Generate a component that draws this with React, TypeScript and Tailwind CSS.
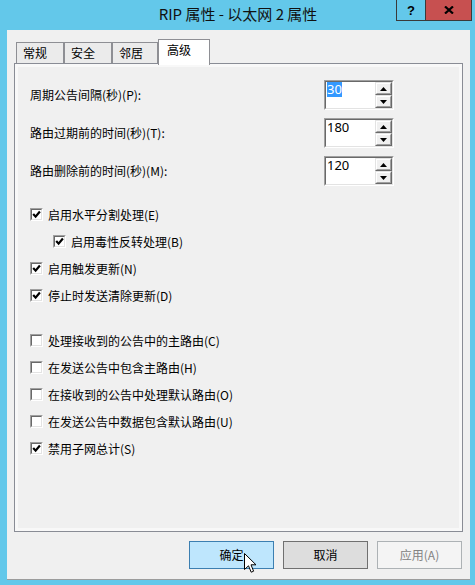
import React from "react";

const FONT = "font-['Noto_Sans_CJK_SC','Microsoft_YaHei',sans-serif]";

function Tri({ up }: { up: boolean }) {
  return (
    <svg width="7" height="4" viewBox="0 0 7 4" className="block">
      {up ? <polygon points="3.5,0 7,4 0,4" fill="#000" /> : <polygon points="0,0 7,0 3.5,4" fill="#000" />}
    </svg>
  );
}

function SpinBtn({ up }: { up: boolean }) {
  return (
    <div className="flex-1 border-t border-l border-[#e3e3e3] border-b border-r border-b-[#696969] border-r-[#696969]">
      <div className="h-full flex items-center justify-center bg-[#f0f0f0] border-t border-l border-white border-b border-r border-b-[#a0a0a0] border-r-[#a0a0a0]">
        <Tri up={up} />
      </div>
    </div>
  );
}

function Spin({ value, selected }: { value: string; selected?: boolean }) {
  return (
    <div className="w-[70px] h-[30px] border-t border-l border-[#a0a0a0] border-b border-r border-b-white border-r-white">
      <div className="h-full flex bg-white border-t border-l border-[#696969] border-b border-r border-b-[#e3e3e3] border-r-[#e3e3e3]">
        <div className="flex-1 flex items-start pl-[1px] pt-[0px]">
          <span
            className={`block text-[13px] leading-[15px] ${
              selected ? "bg-[#3399ff] text-white" : "text-black"
            } font-['Noto_Sans',sans-serif]`}
          >
            {value}
          </span>
        </div>
        <div className="w-[17px] flex flex-col">
          <SpinBtn up />
          <SpinBtn up={false} />
        </div>
      </div>
    </div>
  );
}

function Box({ checked }: { checked: boolean }) {
  return (
    <span className="w-[13px] h-[13px] shrink-0 border-t border-l border-[#a0a0a0] border-b border-r border-b-white border-r-white">
      <span className="w-full h-full flex items-center justify-center bg-white border-t border-l border-[#696969] border-b border-r border-b-[#e3e3e3] border-r-[#e3e3e3]">
        {checked && (
          <svg width="9" height="9" viewBox="0 0 9 9" className="block">
            <path d="M1.2 4.1 L3.6 6.7 L7.9 1.5" fill="none" stroke="#000" strokeWidth="2.2" />
          </svg>
        )}
      </span>
    </span>
  );
}

function CheckRow({ checked, label, indent }: { checked: boolean; label: string; indent?: boolean }) {
  return (
    <div className={`flex items-center h-[27px] ${indent ? "pl-[35px]" : "pl-[12px]"}`}>
      <Box checked={checked} />
      <span className="ml-[5px] text-[12px] leading-[16px] text-black">{label}</span>
    </div>
  );
}

function SpinRow({ label, value, selected }: { label: string; value: string; selected?: boolean }) {
  return (
    <div className="flex items-center h-[30px]">
      <div className="w-[306px] pl-[12px] text-[12px] leading-[16px] text-black">{label}</div>
      <Spin value={value} selected={selected} />
    </div>
  );
}

function Tab({ label, w }: { label: string; w: string }) {
  return (
    <div
      className={`${w} h-[21px] border-t border-l border-r border-[#8e8f94] bg-[#ebebeb] pl-[6px] text-[12px] leading-[19px] text-black`}
    >
      {label}
    </div>
  );
}

function Btn({ label, kind }: { label: string; kind: "def" | "normal" | "disabled" }) {
  const cls =
    kind === "def"
      ? "bg-[#bee6fd] border-[#3c7fb1] text-black"
      : kind === "normal"
      ? "bg-[#dddddd] border-[#707070] text-black"
      : "bg-[#f4f4f4] border-[#adb2b5] text-[#838383]";
  return (
    <div className={`relative w-[85px] h-[28px] border flex items-center justify-center text-[12px] leading-[16px] ${cls}`}>
      {label}
      {kind === "def" && (
        <svg width="13" height="20" viewBox="0 0 13 20" className="absolute left-[54px] top-[11px]">
          <path d="M0.5 0.5 L0.5 16.5 L4.5 12.8 L7.2 19.2 L9.6 18.2 L7 11.8 L12 11.8 Z" fill="#fff" stroke="#000" strokeWidth="1" strokeLinejoin="miter" />
        </svg>
      )}
    </div>
  );
}

export default function App() {
  return (
    <div className={`w-[475px] h-[585px] bg-[#63c8ea] flex flex-col ${FONT}`}>
      {/* title bar */}
      <div className="h-[30px] grid grid-cols-[1fr_auto_1fr] shrink-0">
        <div />
        <div className="self-center text-[15px] leading-[20px] text-[#111] pl-[1px] pb-[3px]">RIP 属性 - 以太网 2 属性</div>
        <div className="flex justify-end items-start pr-[3px]">
          <div className="w-[29px] h-[21px] border-l border-b border-[#3a3a3a] flex items-center justify-center text-[13px] font-bold leading-none text-black font-['Liberation_Sans',sans-serif]">
            ?
          </div>
          <div className="w-[47px] h-[21px] border-l border-r border-b border-[#3a3a3a] bg-[#c75050] flex items-center justify-center">
            <svg width="10" height="8" viewBox="0 0 10 8" className="block">
              <path d="M1 0.5 L9 7.5 M9 0.5 L1 7.5" stroke="#000" strokeWidth="2.2" />
            </svg>
          </div>
        </div>
      </div>

      {/* client area */}
      <div className="ml-[7px] w-[463px] h-[550px] bg-[#f0f0f0] border-b border-[#9c9c9c] flex flex-col">
        {/* tabs */}
        <div className="mt-[9px] ml-[9px] h-[24px] flex items-end relative z-10">
          <Tab label="常规" w="w-[48px]" />
          <Tab label="安全" w="w-[48px]" />
          <Tab label="邻居" w="w-[46px]" />
          <div className="w-[52px] h-[26px] mb-[-2px] border-t border-l border-r border-[#8e8f94] bg-white pl-[8px] pt-[2px] text-[12px] leading-[16px] text-black">
            高级
          </div>
        </div>

        {/* panel */}
        <div className="ml-[7px] w-[449px] h-[469px] border border-[#898c95] bg-[#f8f8f8] p-[3px]">
          <div className="h-full bg-[#f0f0f0] pt-[13px]">
            <div className="flex flex-col gap-[8px]">
              <SpinRow label="周期公告间隔(秒)(P):" value="30" selected />
              <SpinRow label="路由过期前的时间(秒)(T):" value="180" />
              <SpinRow label="路由删除前的时间(秒)(M):" value="120" />
            </div>
            <div className="mt-[15px]">
              <CheckRow checked label="启用水平分割处理(E)" />
              <CheckRow checked indent label="启用毒性反转处理(B)" />
              <CheckRow checked label="启用触发更新(N)" />
              <CheckRow checked label="停止时发送清除更新(D)" />
            </div>
            <div className="mt-[18px]">
              <CheckRow checked={false} label="处理接收到的公告中的主路由(C)" />
              <CheckRow checked={false} label="在发送公告中包含主路由(H)" />
              <CheckRow checked={false} label="在接收到的公告中处理默认路由(O)" />
              <CheckRow checked={false} label="在发送公告中数据包含默认路由(U)" />
              <CheckRow checked label="禁用子网总计(S)" />
            </div>
          </div>
        </div>

        {/* buttons */}
        <div className="mt-[9px] flex justify-end gap-[9px] pr-[8px]">
          <Btn label="确定" kind="def" />
          <Btn label="取消" kind="normal" />
          <Btn label="应用(A)" kind="disabled" />
        </div>
      </div>
    </div>
  );
}
